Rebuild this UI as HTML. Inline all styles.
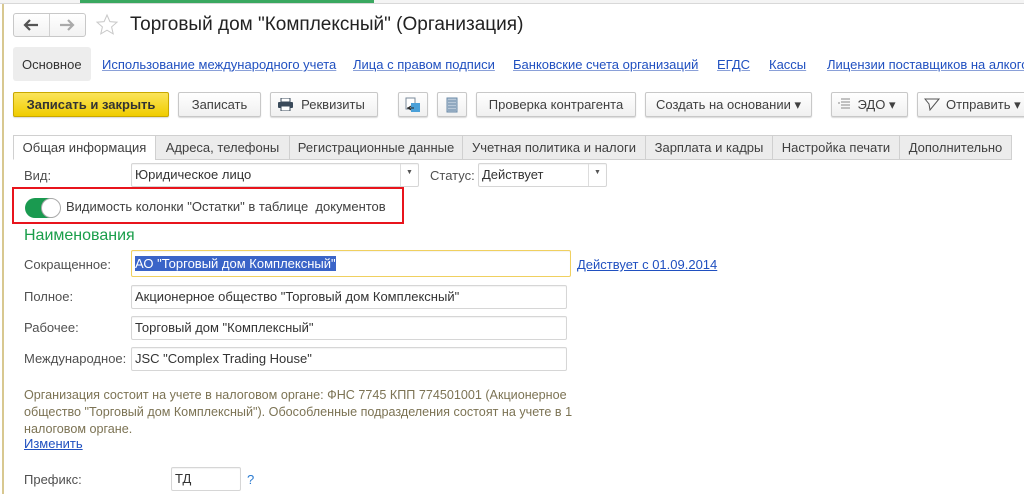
<!DOCTYPE html>
<html><head><meta charset="utf-8"><style>
*{box-sizing:border-box;margin:0;padding:0}
body{width:1024px;height:494px;overflow:hidden;background:#fff;font-family:"Liberation Sans",Arial,sans-serif;font-size:13px;color:#404040;position:relative}
.a{position:absolute}
.btn{position:absolute;top:92px;height:25px;border:1px solid #c8c8c8;border-radius:2px;background:linear-gradient(#fff,#f0f0f0);box-shadow:0 1px 1px rgba(0,0,0,.15);text-align:center;line-height:23px;color:#404040;font-size:13px;white-space:nowrap}
.lnk{position:absolute;top:57px;color:#2050c0;text-decoration:underline;text-decoration-color:#8aa0d8;font-size:13px}
.tab{position:absolute;top:135px;height:25px;border:1px solid #d0d0d0;background:#ececec;line-height:23px;text-align:center;font-size:13px;color:#404040}
.inp{position:absolute;border:1px solid #d6d6d6;border-radius:2px;background:#fff;font-size:13px;color:#333;padding-left:3px;white-space:nowrap;box-shadow:inset 0 1px 1px rgba(0,0,0,.05)}
.lbl{position:absolute;font-size:13px;color:#505050;line-height:16px}
</style></head><body>
<div class="a" style="left:0;top:0;width:1024px;height:4px;background:#f4f4f4;border-bottom:1px solid #d8d8d8"></div>
<div class="a" style="left:80px;top:0;width:294px;height:3px;background:#3aa860"></div>
<div class="a" style="left:2px;top:4px;width:2px;height:490px;background:#d8c890"></div>

<div class="a" style="left:13px;top:13px;width:73px;height:24px;border:1px solid #c8c8c8;border-radius:3px;background:linear-gradient(#fff,#f2f2f2)"></div>
<div class="a" style="left:49px;top:14px;width:1px;height:22px;background:#d0d0d0"></div>
<svg class="a" style="left:23px;top:19px" width="16" height="12" viewBox="0 0 16 12"><path d="M15 6H3M7 1L2 6l5 5" stroke="#555" stroke-width="2.2" fill="none"/></svg>
<svg class="a" style="left:59px;top:19px" width="16" height="12" viewBox="0 0 16 12"><path d="M1 6h12M9 1l5 5-5 5" stroke="#aaa" stroke-width="2.2" fill="none"/></svg>
<svg class="a" style="left:95px;top:13px" width="24" height="24" viewBox="0 0 24 24"><path d="M12 2l2.9 6.6 7.1.6-5.4 4.7 1.6 7L12 17.2 5.8 20.9l1.6-7L2 9.2l7.1-.6z" fill="none" stroke="#c8c8c8" stroke-width="1"/></svg>
<div class="a" style="left:130px;top:12px;font-size:19px;color:#222;line-height:26px">Торговый дом "Комплексный" (Организация)</div>

<div class="a" style="left:13px;top:47px;width:78px;height:34px;background:#ededed;border-radius:3px"></div>
<div class="a" style="left:22px;top:57px;font-size:13px;color:#333">Основное</div>
<div class="lnk" style="left:102px">Использование международного учета</div>
<div class="lnk" style="left:353px">Лица с правом подписи</div>
<div class="lnk" style="left:513px">Банковские счета организаций</div>
<div class="lnk" style="left:717px">ЕГДС</div>
<div class="lnk" style="left:769px">Кассы</div>
<div class="lnk" style="left:827px;white-space:nowrap">Лицензии поставщиков на алкогольную</div>

<div class="btn" style="left:13px;width:156px;background:linear-gradient(#fbe45a,#f0cd00);border-color:#c9a800;font-weight:bold;color:#333">Записать и закрыть</div>
<div class="btn" style="left:178px;width:83px">Записать</div>
<div class="btn" style="left:270px;width:108px;padding-left:18px">Реквизиты</div>
<svg class="a" style="left:278px;top:98px" width="15" height="13" viewBox="0 0 15 13"><rect x="3" y="0" width="9" height="4" fill="#fff" stroke="#3a4a5a"/><rect x="0" y="4" width="15" height="6" rx="1" fill="#3a4a5a"/><rect x="3" y="8" width="9" height="5" fill="#fff" stroke="#3a4a5a"/></svg>
<div class="btn" style="left:398px;width:30px"></div>
<svg class="a" style="left:405px;top:97px" width="16" height="16" viewBox="0 0 16 16"><rect x="1" y="1" width="9" height="11" fill="#fff" stroke="#7a8a9a"/><rect x="6" y="6" width="9" height="9" fill="#4aa0d8"/><path d="M2 11h7M6 9l-3 2 3 2" stroke="#222" fill="none"/></svg>
<div class="btn" style="left:437px;width:30px"></div>
<svg class="a" style="left:446px;top:97px" width="12" height="16" viewBox="0 0 12 16"><rect x="1" y="1" width="10" height="14" fill="#b8c8d8" stroke="#6a8aa8"/><path d="M2 4h8M2 7h8M2 10h8M2 13h8" stroke="#6a8aa8"/></svg>
<div class="btn" style="left:476px;width:160px">Проверка контрагента</div>
<div class="btn" style="left:645px;width:167px">Создать на основании &#9662;</div>
<div class="btn" style="left:831px;width:77px;padding-left:14px">ЭДО &#9662;</div>
<svg class="a" style="left:838px;top:97px" width="14" height="14" viewBox="0 0 14 14"><path d="M3 2h9M3 5h9M3 8h9M3 11h9M0 6h2" stroke="#888" fill="none"/></svg>
<div class="btn" style="left:917px;width:110px;text-align:left;padding-left:28px">Отправить &#9662;</div>
<svg class="a" style="left:924px;top:97px" width="16" height="14" viewBox="0 0 16 14"><path d="M1 2l14 0-9 11-1-6z" fill="none" stroke="#555"/></svg>

<div class="a" style="left:13px;top:159px;width:998px;height:1px;background:#d0d0d0"></div>
<div class="tab" style="left:13px;width:143px;background:#fff;border-bottom-color:#fff">Общая информация</div>
<div class="tab" style="left:155px;width:135px">Адреса, телефоны</div>
<div class="tab" style="left:289px;width:174px">Регистрационные данные</div>
<div class="tab" style="left:462px;width:184px">Учетная политика и налоги</div>
<div class="tab" style="left:645px;width:128px">Зарплата и кадры</div>
<div class="tab" style="left:772px;width:128px">Настройка печати</div>
<div class="tab" style="left:899px;width:113px">Дополнительно</div>

<div class="lbl" style="left:24px;top:168px">Вид:</div>
<div class="inp" style="left:131px;top:163px;width:288px;height:24px;line-height:22px">Юридическое лицо</div>
<div class="a" style="left:400px;top:164px;width:1px;height:22px;background:#ddd"></div>
<div class="a" style="left:406px;top:169px;font-size:7px;color:#555">&#9660;</div>
<div class="lbl" style="left:430px;top:168px">Статус:</div>
<div class="inp" style="left:478px;top:163px;width:129px;height:24px;line-height:22px">Действует</div>
<div class="a" style="left:588px;top:164px;width:1px;height:22px;background:#ddd"></div>
<div class="a" style="left:594px;top:169px;font-size:7px;color:#555">&#9660;</div>

<div class="a" style="left:12px;top:187px;width:392px;height:37px;border:2px solid #e8141c"></div>
<div class="a" style="left:25px;top:198px;width:35px;height:20px;border-radius:10px;background:#1a9a50"></div>
<div class="a" style="left:41px;top:198px;width:20px;height:20px;border-radius:50%;background:#fff;border:1px solid #aaa"></div>
<div class="a" style="left:66px;top:199px;font-size:13px;color:#404040;line-height:16px">Видимость колонки "Остатки" в таблице &nbsp;документов</div>

<div class="a" style="left:24px;top:226px;font-size:16px;color:#1a9e4a;line-height:19px">Наименования</div>

<div class="lbl" style="left:24px;top:257px">Сокращенное:</div>
<div class="inp" style="left:131px;top:250px;width:440px;height:27px;border-color:#f0d060;line-height:25px"><span style="background:#3a64c8;color:#fff">АО "Торговый дом Комплексный"</span></div>
<a class="a" style="left:577px;top:257px;color:#2050c0;text-decoration:underline;line-height:16px">Действует с 01.09.2014</a>

<div class="lbl" style="left:24px;top:289px">Полное:</div>
<div class="inp" style="left:131px;top:285px;width:436px;height:24px;line-height:22px">Акционерное общество "Торговый дом Комплексный"</div>
<div class="lbl" style="left:24px;top:320px">Рабочее:</div>
<div class="inp" style="left:131px;top:316px;width:436px;height:24px;line-height:22px">Торговый дом "Комплексный"</div>
<div class="lbl" style="left:24px;top:351px">Международное:</div>
<div class="inp" style="left:131px;top:347px;width:436px;height:24px;line-height:22px">JSC "Complex Trading House"</div>

<div class="a" style="left:24px;top:387px;width:570px;font-size:12.6px;line-height:17px;color:#7c7354">Организация состоит на учете в налоговом органе: ФНС 7745 КПП 774501001 (Акционерное общество "Торговый дом Комплексный"). Обособленные подразделения состоят на учете в 1 налоговом органе.</div>
<a class="a" style="left:24px;top:436px;color:#2050c0;text-decoration:underline;line-height:16px">Изменить</a>

<div class="lbl" style="left:24px;top:472px">Префикс:</div>
<div class="inp" style="left:171px;top:467px;width:70px;height:24px;line-height:22px">ТД</div>
<div class="a" style="left:247px;top:472px;color:#2a7ad0;line-height:16px">?</div>
</body></html>
